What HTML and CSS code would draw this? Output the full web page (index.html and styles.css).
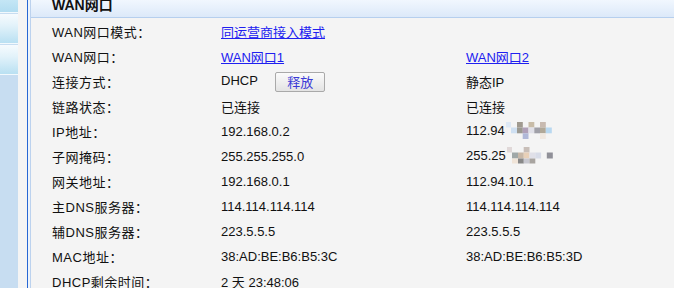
FILE: index.html
```html
<!DOCTYPE html>
<html>
<head>
    <title>WAN网口</title>
    <link rel="stylesheet" href="styles.css">
</head>
<body>
    <div class="sidebar">
        <div class="menu-item first"></div>
        <div class="menu-item"></div>
        <div class="menu-item"></div>
    </div>
    <div class="gutter"></div>
    <div class="main">
        <div class="panel">
            <div class="panel-head">
                <h2>WAN网口</h2>
            </div>
            <table class="info">
                <tr>
                    <td class="label">WAN网口模式：</td>
                    <td colspan="2"><a href="#">同运营商接入模式</a></td>
                </tr>
                <tr>
                    <td class="label">WAN网口：</td>
                    <td class="col1"><a href="#">WAN网口1</a></td>
                    <td><a href="#">WAN网口2</a></td>
                </tr>
                <tr>
                    <td class="label">连接方式：</td>
                    <td class="col1">DHCP <button class="btn-release">释放</button></td>
                    <td>静态IP</td>
                </tr>
                <tr>
                    <td class="label">链路状态：</td>
                    <td class="col1">已连接</td>
                    <td>已连接</td>
                </tr>
                <tr>
                    <td class="label">IP地址：</td>
                    <td class="col1">192.168.0.2</td>
                    <td>112.94<svg class="mosaic" width="48" height="18" viewBox="0 0 48 18">
                        <rect x="1" y="0" width="5" height="5.5" fill="#dde8f5"/>
                        <rect x="12" y="0" width="5.8" height="5.5" fill="#a09a90"/>
                        <rect x="23.5" y="0" width="5.8" height="5.5" fill="#c8bca8"/>
                        <rect x="35" y="0" width="5.8" height="5.5" fill="#c8bab0"/>
                        <rect x="6" y="5.5" width="6" height="5.8" fill="#cfe0f2"/>
                        <rect x="12" y="5.5" width="5.8" height="5.8" fill="#9c9a92"/>
                        <rect x="17.7" y="5.5" width="5.8" height="5.8" fill="#b0a0b8"/>
                        <rect x="23.5" y="5.5" width="5.8" height="5.8" fill="#e0e0e8"/>
                        <rect x="29.3" y="5.5" width="5.8" height="5.8" fill="#a0a0a8"/>
                        <rect x="35" y="5.5" width="5.8" height="5.8" fill="#b0a898"/>
                        <rect x="40.8" y="5.5" width="6" height="5.8" fill="#b8d8f0"/>
                        <rect x="17.7" y="11.3" width="5.8" height="5.7" fill="#b0b8d8"/>
                        <rect x="35" y="11.3" width="5.8" height="5.7" fill="#f0e8e0"/>
                    </svg></td>
                </tr>
                <tr>
                    <td class="label">子网掩码：</td>
                    <td class="col1">255.255.255.0</td>
                    <td>255.25<svg class="mosaic" width="48" height="18" viewBox="0 0 48 18">
                        <rect x="1" y="0" width="5" height="5.5" fill="#e0d8d8"/>
                        <rect x="17.7" y="0" width="5.8" height="5.5" fill="#c8beb8"/>
                        <rect x="6" y="5.5" width="6" height="6" fill="#a0a8a8"/>
                        <rect x="12" y="5.5" width="5.8" height="6" fill="#c8b8a8"/>
                        <rect x="17.7" y="5.5" width="5.8" height="6" fill="#e8d0b8"/>
                        <rect x="23.5" y="5.5" width="5.8" height="6" fill="#e0e0e8"/>
                        <rect x="29.3" y="5.5" width="5.8" height="6" fill="#d8dce8"/>
                        <rect x="40.8" y="5.5" width="6" height="6" fill="#909098"/>
                        <rect x="6" y="11.5" width="6" height="5" fill="#f0e4d8"/>
                        <rect x="12" y="11.5" width="5.8" height="5" fill="#888888"/>
                        <rect x="17.7" y="11.5" width="5.8" height="5" fill="#c8c8d0"/>
                        <rect x="23.5" y="11.5" width="5.8" height="5" fill="#a8a4a0"/>
                    </svg></td>
                </tr>
                <tr>
                    <td class="label">网关地址：</td>
                    <td class="col1">192.168.0.1</td>
                    <td>112.94.10.1</td>
                </tr>
                <tr>
                    <td class="label">主DNS服务器：</td>
                    <td class="col1">114.114.114.114</td>
                    <td>114.114.114.114</td>
                </tr>
                <tr>
                    <td class="label">辅DNS服务器：</td>
                    <td class="col1">223.5.5.5</td>
                    <td>223.5.5.5</td>
                </tr>
                <tr>
                    <td class="label">MAC地址：</td>
                    <td class="col1">38:AD:BE:B6:B5:3C</td>
                    <td>38:AD:BE:B6:B5:3D</td>
                </tr>
                <tr>
                    <td class="label">DHCP剩余时间：</td>
                    <td class="col1">2 天 23:48:06</td>
                    <td></td>
                </tr>
            </table>
        </div>
    </div>
</body>
</html>
```

FILE: styles.css
```css
html, body { height: 100%; }
body { margin: 0; display: flex; overflow: hidden; background: #f4f4f4; font-family: "Liberation Sans", "Noto Sans CJK SC", sans-serif; font-size: 13px; color: #111; }

.sidebar { width: 18px; flex: none; background: #c7ddf1; }
.menu-item { height: 29px; margin-bottom: 1px; background: linear-gradient(#f6fbfe, #e2f2fa 40%, #b9e0f2); border-bottom: 1px solid #f2f9fd; }
.menu-item.first { height: 12px; background: linear-gradient(#c4e6f5, #b2ddf1); }

.gutter { width: 9px; flex: none; background: #f4f4f4; }

.main { flex: 1; border-left: 1px solid #2767d4; padding-left: 2px; background: #eef4fb; display: flex; }
.panel { flex: 1; border-left: 1px solid #bcd2ee; background: #f4f4f4; }

.panel-head { height: 17px; overflow: hidden; padding-left: 21px; border-bottom: 1px solid #b6cfee; background: linear-gradient(#f1f7fe, #dce9f9); }
.panel-head h2 { margin: -3px 0 0; font-size: 14px; line-height: 17px; font-weight: bold; color: #111; }

.info { border-collapse: collapse; margin: 1px 0 0 21px; }
.info td { height: 25px; padding: 0; white-space: nowrap; vertical-align: middle; }
.info .label { width: 169px; letter-spacing: 0.5px; }
.info .col1 { width: 245px; }
.info a { color: #2020f0; }

.btn-release { width: 50px; height: 20px; margin-left: 14px; padding: 0; border: 1px solid #a9a9a9; border-radius: 2px; background: linear-gradient(#fbfbfb, #e3e3e3); color: #3a3ad6; font-family: "Noto Sans CJK SC", sans-serif; font-size: 13px; line-height: 18px; vertical-align: middle; }

.mosaic { vertical-align: middle; margin-top: -2px; }
```
